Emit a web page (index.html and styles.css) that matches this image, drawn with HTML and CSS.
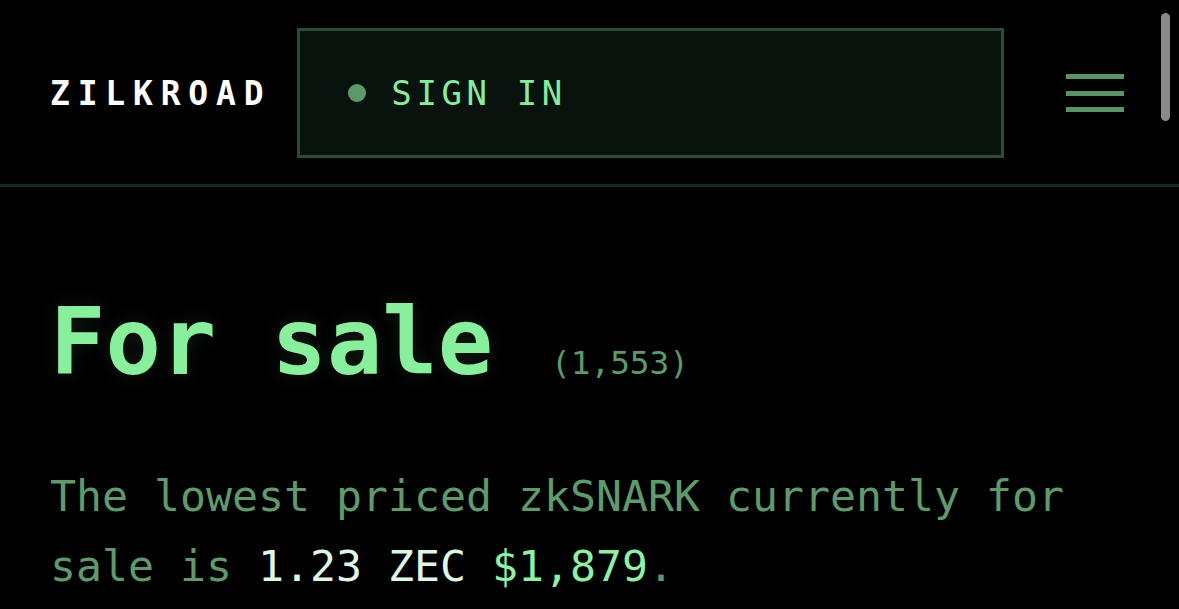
FILE: index.html
```html
<!DOCTYPE html>
<html lang="en">
<head>
  <meta charset="UTF-8" />
  <title>Zilkroad</title>
  <link rel="stylesheet" href="styles.css">
</head>
<body>
  <header class="topbar">
    <div class="logo">ZILKROAD</div>
    <a class="signin" href="#"><span class="dot"></span>SIGN IN</a>
    <button class="menu" aria-label="Menu"><span></span><span></span><span></span></button>
  </header>
  <div class="scrollbar"></div>
  <main class="content">
    <div class="title-row">
      <h1>For sale</h1>
      <span class="count">(1,553)</span>
    </div>
    <p class="lead">The lowest priced zkSNARK currently for sale is <span class="zec">1.23 ZEC</span> <span class="usd">$1,879</span>.</p>
  </main>
</body>
</html>
```

FILE: styles.css
```css
body { margin: 0; background: #000; font-family: "DejaVu Sans Mono", "Liberation Mono", monospace; overflow: hidden; }
.topbar { display: flex; align-items: center; height: 182px; padding: 2px 55px 0 50px; border-bottom: 3px solid #1c2b22; }
.logo { color: #fff; font-size: 33px; font-weight: bold; letter-spacing: 7.8px; margin-right: 26px; }
.signin { flex: 1; display: flex; align-items: center; height: 124px; padding-left: 48px; background: #08130d; border: 3px solid #2c4a35; color: #88ec9c; font-size: 34px; letter-spacing: 4.6px; text-decoration: none; }
.dot { width: 18px; height: 18px; border-radius: 50%; background: #5b9a68; margin-right: 25px; }
.menu { display: flex; flex-direction: column; gap: 11.5px; margin-left: 62px; padding: 0; background: none; border: 0; cursor: pointer; }
.menu span { display: block; width: 58px; height: 5px; background: #5a9464; }
.scrollbar { position: absolute; top: 13px; left: 1161px; width: 9px; height: 108px; border-radius: 5px; background: #8a8a8a; }
.content { padding: 0 50px; }
.title-row { display: flex; align-items: baseline; margin-top: 110px; }
h1 { margin: 0; font-size: 92px; line-height: 1; font-weight: bold; color: #88f09c; text-shadow: 0 0 18px rgba(136, 240, 156, 0.12); }
.count { margin-left: 58px; font-size: 32.7px; color: #5c9a6a; }
.lead { margin: 72px 0 0; font-size: 43.2px; line-height: 70px; color: #5e9a6b; }
.zec { color: #e0f6e4; }
.usd { color: #8ef0a2; }
```
